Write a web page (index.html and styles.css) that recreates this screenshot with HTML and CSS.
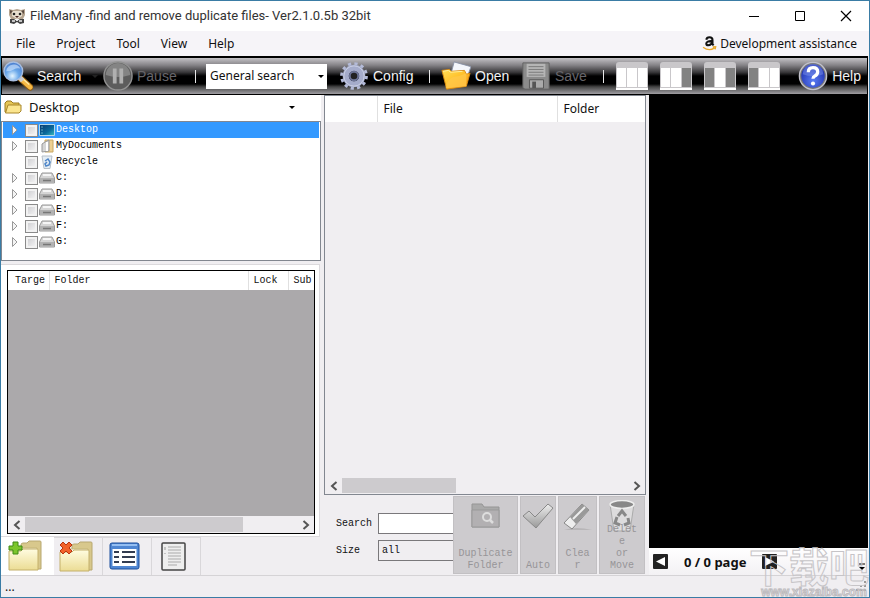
FILE: index.html
```html
<!DOCTYPE html>
<html lang="en">
<head>
<meta charset="utf-8">
<title>FileMany</title>
<link rel="stylesheet" href="styles.css">
</head>
<body>
<svg class="defs" aria-hidden="true">
  <defs>
    <linearGradient id="folder" x1="0" y1="0" x2="0" y2="1"><stop offset="0" stop-color="#fffce0"/><stop offset="1" stop-color="#ebdc94"/></linearGradient>
    <linearGradient id="gold" x1="0" y1="0" x2="1" y2="1"><stop offset="0" stop-color="#ffdf58"/><stop offset=".5" stop-color="#ffc02a"/><stop offset="1" stop-color="#f58a10"/></linearGradient>
    <linearGradient id="steel" x1="0" y1="0" x2="0" y2="1"><stop offset="0" stop-color="#eee"/><stop offset="1" stop-color="#999"/></linearGradient>
    <radialGradient id="lens" cx=".45" cy=".75" r=".7"><stop offset="0" stop-color="#e6f6ff"/><stop offset=".5" stop-color="#6aa8ea"/><stop offset="1" stop-color="#4c80d0"/></radialGradient>
    <radialGradient id="ball" cx=".5" cy=".7" r=".7"><stop offset="0" stop-color="#5a7cf4"/><stop offset="1" stop-color="#1c2ca8"/></radialGradient>
    <linearGradient id="desk" x1="0" y1="0" x2="1" y2="1"><stop offset="0" stop-color="#08366e"/><stop offset=".6" stop-color="#0a6a9c"/><stop offset="1" stop-color="#3cc0c0"/></linearGradient>
    <symbol id="expand" viewBox="0 0 8 12"><path d="M1.500 1.500v9L6 6z" fill="#f4f4f4" stroke="#999"/></symbol>
    <symbol id="drive" viewBox="0 0 16 14"><path d="M3 2h10l2.500 5v5H.5V7z" fill="#d5d5d5" stroke="#999"/><path d="M1 7h14v4.500H1z" fill="#b2b2b2"/><path d="M4 9.500h8" stroke="#777" stroke-width="1.500"/><path d="M4 4h8" stroke="#f5f5f5" stroke-width="2"/></symbol>
    <symbol id="bigfolder" viewBox="0 0 34 32"><path d="M13 5q0-2 2-2h4l2-2h11q1 0 1 1v27H13z" fill="#d8c88c" stroke="#b8a870"/><path d="M5 8h24v20H5z" fill="#fff" stroke="#c5b678"/><path d="M1 11h12l2-2h14q1 0 1 1v20H1z" fill="url(#folder)" stroke="#c4b06a"/></symbol>
  </defs>
</svg>
<div class="window">
  <header class="titlebar">
    <svg class="app-icon" viewBox="0 0 18 18"><path d="M1 2l4 1 4-1 4 1 4-1v6l-2 4H3L1 8z" fill="#b5a48f"/><path d="M4 4h10v5l-5 3-5-3z" fill="#e8dfcf"/><path d="M2 3l3 1-3 3zM16 3l-3 1 3 3z" fill="#5b4b41"/><circle cx="6" cy="7" r="1.300" fill="#222"/><circle cx="12" cy="7" r="1.300" fill="#222"/><path d="M7 9h4l-2 2z" fill="#422"/><path d="M2 12h4l3 2 3-2h4v4l-4 1-3-2-3 2-4-1z" fill="#444"/><path d="M4 14h3M11 14h3M8 13h2" stroke="#eee" stroke-width="1.500"/></svg>
    <h1>FileMany -find and remove duplicate files- Ver2.1.0.5b 32bit</h1>
    <div class="caption-buttons">
      <button aria-label="Minimize"><svg viewBox="0 0 12 12"><path d="M1 6.500h10" stroke="#000"/></svg></button>
      <button aria-label="Maximize"><svg viewBox="0 0 12 12"><path d="M1.500 1.500h9v9h-9z" fill="none" stroke="#000"/></svg></button>
      <button aria-label="Close"><svg viewBox="0 0 12 12"><path d="M1 1l10 10M11 1L1 11" stroke="#000" stroke-width="1.200"/></svg></button>
    </div>
  </header>
  <nav class="menubar">
    <button>File</button><button>Project</button><button>Tool</button><button>View</button><button>Help</button>
    <a href="#assist" class="assist"><svg viewBox="0 0 14 14"><path d="M4 3.500Q4.300 1.200 7 1.200q2.800 0 2.800 2.500v3.800l1 1.200M9.500 4.800Q4 4.500 4 7q0 1.700 1.800 1.700Q9 8.500 9.500 5.500" fill="none" stroke="#111" stroke-width="1.900"/><path d="M1 10.500q5.500 4 10.500.8M10 10.300l2.700-.3-.5 2.500" fill="none" stroke="#e9a82c" stroke-width="1.300"/></svg>Development assistance</a>
  </nav>
  <div class="toolbar">
    <button class="tool">
      <svg viewBox="0 0 32 32"><path d="M19 19l10 9" stroke="#8b5b14" stroke-width="7" stroke-linecap="round"/><path d="M19 19l10 9" stroke="#f6b944" stroke-width="5" stroke-linecap="round"/><path d="M20 18l8 7" stroke="#ffe9a4" stroke-width="1.500"/><path d="M17 17l4 4" stroke="#ccc" stroke-width="5"/><circle cx="11" cy="11" r="10" fill="url(#lens)" stroke="#a8bee0" stroke-width="1.500"/><path d="M3.500 11a8 8 0 0 1 15-3q-4-1-7 1t-8 2z" fill="#d5e8ff" opacity=".6"/></svg>
      <span>Search</span><i class="caret dim"></i></button>
    <button class="tool off" disabled>
      <svg viewBox="0 0 32 32"><circle cx="16" cy="16" r="15" fill="#5c5c5c" stroke="#929292" stroke-width="1.500"/><path d="M3 15a13 13 0 0 1 26 0q-13 4-26 0z" fill="#848484"/><path d="M12.500 8v16M19.500 8v16" stroke="#b0b0b0" stroke-width="4"/></svg>
      <span>Pause</span></button>
    <i class="divider"></i>
    <select aria-label="Search type" class="search-type"><option>General search</option></select>
    <button class="tool">
      <svg viewBox="0 0 32 32"><circle cx="16" cy="16" r="13" fill="none" stroke="#b4bbd8" stroke-width="3.600" stroke-dasharray="3.400 3.407"/><circle cx="16" cy="16" r="8.800" fill="none" stroke="#a5accb" stroke-width="6.500"/><circle cx="16" cy="16" r="10.800" fill="none" stroke="#ccd1e4"/><circle cx="16" cy="16" r="4.500" fill="#222" stroke="#6d7598" stroke-width="2"/></svg>
      <span>Config</span></button>
    <i class="divider"></i>
    <button class="tool">
      <svg viewBox="0 0 32 32"><path d="M14 1l18 5-7 19-16-5z" fill="#f4f6fb" stroke="#8b93a8"/><path d="M1 10l8-1 2 2 14-1 2 4 4-1-4 14-21 3z" fill="url(#gold)" stroke="#d98a12"/><path d="M5 29q1-9 8-12 8-1 14-4v14z" fill="#ffc84a" opacity=".8"/><path d="M2 11l6-1 2 2 13-1" stroke="#fff0a0" fill="none"/></svg>
      <span>Open</span></button>
    <button class="tool off" disabled>
      <svg viewBox="0 0 32 32"><path d="M2 2h28v28H4l-2-2z" fill="#8b8b8b" stroke="#626262"/><path d="M6 3h20v14H6z" fill="#b5b5b5"/><path d="M8 6h16M8 9h16M8 12h16M8 15h16" stroke="#777"/><path d="M9 20h15v9H9z" fill="#aaa" stroke="#555"/><path d="M12 22h4v7h-4z" fill="#555"/></svg>
      <span>Save</span></button>
    <i class="divider"></i>
    <div class="panes">
      <button aria-label="Show all panes"><svg viewBox="0 0 32 28"><path d="M0 27V3q0-3 3-3h26q3 0 3 3v24z" fill="#c9c7ca"/><path d="M1 6h9v19H1zM11 6h10v19H11zM22 6h9v19h-9z" fill="#fff"/><path d="M0 27h32" stroke="#fff" stroke-width="2"/></svg></button>
      <button aria-label="Hide right pane"><svg viewBox="0 0 32 28"><path d="M0 27V3q0-3 3-3h26q3 0 3 3v24z" fill="#c9c7ca"/><path d="M1 6h9v19H1zM11 6h10v19H11z" fill="#fff"/><path d="M22 6h9v19h-9z" fill="#828282"/><path d="M0 27h32" stroke="#fff" stroke-width="2"/></svg></button>
      <button aria-label="Hide side panes"><svg viewBox="0 0 32 28"><path d="M0 27V3q0-3 3-3h26q3 0 3 3v24z" fill="#c9c7ca"/><path d="M11 6h10v19H11z" fill="#fff"/><path d="M1 6h9v19H1zM22 6h9v19h-9z" fill="#828282"/><path d="M0 27h32" stroke="#fff" stroke-width="2"/></svg></button>
      <button aria-label="Hide left pane"><svg viewBox="0 0 32 28"><path d="M0 27V3q0-3 3-3h26q3 0 3 3v24z" fill="#c9c7ca"/><path d="M11 6h10v19H11zM22 6h9v19h-9z" fill="#fff"/><path d="M1 6h9v19H1z" fill="#828282"/><path d="M0 27h32" stroke="#fff" stroke-width="2"/></svg></button>
    </div>
    <button class="tool">
      <svg viewBox="0 0 32 32"><circle cx="16" cy="16" r="14.500" fill="#777" stroke="#c2c2cc" stroke-width="1.500"/><circle cx="16" cy="16" r="12.500" fill="url(#ball)"/><path d="M5 14a11 11 0 0 1 22 0q-11 4-22 0z" fill="#8fa4f4" opacity=".4"/><path d="M11 12q0-5 5-5t5 4.500q0 3-3 4.500-2 1-2 3" fill="none" stroke="#fff" stroke-width="3.500"/><circle cx="16" cy="24" r="2.200" fill="#fff"/></svg>
      <span>Help</span></button>
  </div>
  <main>
    <section class="left">
      <div class="location">
        <svg viewBox="0 0 18 16"><path d="M1 13V4l2-2h4l2 2h6v9z" fill="#e6c655" stroke="#9c7a20"/><path d="M1.500 14L4 6h13v6l-2 2z" fill="#fbe58e" stroke="#a8862a"/></svg>
        <select aria-label="Location"><option>Desktop</option></select>
      </div>
      <ul class="tree">
        <li class="selected"><button aria-label="Expand"><svg viewBox="0 0 8 12"><use href="#expand"/></svg></button><label><input type="checkbox"><svg class="node" viewBox="0 0 16 14"><path d="M.5 1.500h15v11H.5z" fill="url(#desk)" stroke="#b5d8e8"/><path d="M2.500 4h1M2.500 7h1M2.500 10h1" stroke="#bff"/></svg>Desktop</label></li>
        <li><button aria-label="Expand"><svg viewBox="0 0 8 12"><use href="#expand"/></svg></button><label><input type="checkbox"><svg class="node" viewBox="0 0 16 14"><path d="M6 1h8v12H6z" fill="#edd092" stroke="#c8a862"/><path d="M3 5l3-2 4-2v11l-7 1z" fill="#d5d5d5" stroke="#999"/><path d="M8 3v9" stroke="#fff" stroke-width="2"/></svg>MyDocuments</label></li>
        <li><button class="leaf" aria-label="No children" disabled></button><label><input type="checkbox"><svg class="node" viewBox="0 0 16 14"><path d="M3 1h10l-2 12.500H5z" fill="#e4edf4" stroke="#b5bfc8"/><path d="M6 6l3-2 2 3-1 3-3 1-1-2 2-2" fill="none" stroke="#4f86c8" stroke-width="1.500"/></svg>Recycle</label></li>
        <li><button aria-label="Expand"><svg viewBox="0 0 8 12"><use href="#expand"/></svg></button><label><input type="checkbox"><svg class="node" viewBox="0 0 16 14"><use href="#drive"/></svg>C:</label></li>
        <li><button aria-label="Expand"><svg viewBox="0 0 8 12"><use href="#expand"/></svg></button><label><input type="checkbox"><svg class="node" viewBox="0 0 16 14"><use href="#drive"/></svg>D:</label></li>
        <li><button aria-label="Expand"><svg viewBox="0 0 8 12"><use href="#expand"/></svg></button><label><input type="checkbox"><svg class="node" viewBox="0 0 16 14"><use href="#drive"/></svg>E:</label></li>
        <li><button aria-label="Expand"><svg viewBox="0 0 8 12"><use href="#expand"/></svg></button><label><input type="checkbox"><svg class="node" viewBox="0 0 16 14"><use href="#drive"/></svg>F:</label></li>
        <li><button aria-label="Expand"><svg viewBox="0 0 8 12"><use href="#expand"/></svg></button><label><input type="checkbox"><svg class="node" viewBox="0 0 16 14"><use href="#drive"/></svg>G:</label></li>
      </ul>
      <div class="tab-page">
        <div class="targets">
          <table><thead><tr><th class="c-target">Targe</th><th>Folder</th><th class="c-lock">Lock</th><th class="c-sub">Sub</th></tr></thead></table>
          <div class="fill"></div>
          <div class="scroll">
            <button aria-label="Scroll left"><svg viewBox="0 0 8 10"><path d="M6.500 1L2 5l4.500 4" fill="none" stroke="#555" stroke-width="2"/></svg></button>
            <div class="track"><i class="thumb wide"></i></div>
            <button aria-label="Scroll right"><svg viewBox="0 0 8 10"><path d="M1.500 1L6 5 1.500 9" fill="none" stroke="#555" stroke-width="2"/></svg></button>
          </div>
        </div>
      </div>
      <div class="tabs">
        <button class="active" aria-label="Include folders"><svg viewBox="0 0 34 32"><use href="#bigfolder"/><path d="M5 2h5v4h4v4h-4v4H5v-4H1V6h4z" fill="#7cc62c" stroke="#3f8a14"/></svg></button>
        <button aria-label="Exclude folders"><svg viewBox="0 0 34 32"><use href="#bigfolder"/><path d="M1 4l3-3 3 3 3-3 3 3-3 3 3 3-3 3-3-3-3 3-3-3 3-3z" fill="#f2622a" stroke="#b83510"/></svg></button>
        <button aria-label="List"><svg viewBox="0 0 34 32"><rect x="2" y="2" width="29" height="26" rx="2" fill="#4f86d2" stroke="#1d4f9c"/><path d="M4 4h25" stroke="#94bef2" stroke-width="2"/><path d="M4.500 8h24v17h-24z" fill="#fff"/><path d="M6 11h5M14 11h13M6 16h5M14 16h13M6 21h5M14 21h13" stroke="#333c50" stroke-width="2"/></svg></button>
        <button aria-label="Report"><svg viewBox="0 0 34 32"><rect x="5" y="2" width="23" height="27" rx="1" fill="#eee" stroke="#444" stroke-width="1.500"/><path d="M11 6h13M11 9h13M11 12h13M11 15h13M11 18h13M11 21h13M11 24h9" stroke="#aaa"/><path d="M8 6v3M8 12v1" stroke="#999"/></svg></button>
      </div>
    </section>
    <section class="middle">
      <div class="results">
        <table><thead><tr><th class="c-mark" aria-label="Mark"></th><th class="c-file">File</th><th>Folder</th></tr></thead></table>
        <div class="fill"></div>
        <div class="scroll">
          <button aria-label="Scroll left"><svg viewBox="0 0 8 10"><path d="M6.500 1L2 5l4.500 4" fill="none" stroke="#555" stroke-width="2"/></svg></button>
          <div class="track"><i class="thumb short"></i></div>
          <button aria-label="Scroll right"><svg viewBox="0 0 8 10"><path d="M1.500 1L6 5 1.500 9" fill="none" stroke="#555" stroke-width="2"/></svg></button>
        </div>
      </div>
      <div class="actions">
        <form class="filters">
          <label for="q">Search</label><input id="q" type="text">
          <label for="size">Size</label><select id="size"><option>all</option></select>
        </form>
        <button class="action a1" disabled><svg viewBox="0 0 32 32"><path d="M2 27V4h10l2 3h15v20z" fill="#aaa" stroke="#959595"/><path d="M2 10h27v17H2z" fill="#b2b0b2" stroke="#999"/><circle cx="17" cy="17" r="4" fill="none" stroke="#ddd" stroke-width="2"/><path d="M20 20l3 3" stroke="#ddd" stroke-width="2.500"/></svg><span>Duplicate<br>Folder</span></button>
        <button class="action a2" disabled><svg viewBox="0 0 32 32"><path d="M1 16l6-5 6 6L26 4l5 4-17 20z" fill="url(#steel)" stroke="#888"/></svg><span>Auto</span></button>
        <button class="action a3" disabled><svg viewBox="0 0 32 32"><path d="M2 30q12-4 28 0z" fill="#b8b6b8"/><path d="M2 23L20 4l7 6L10 29z" fill="#eee" stroke="#888"/><path d="M8 17L20 4l7 6-13 14z" fill="#999"/><path d="M11 19L23 7" stroke="#eee" stroke-width="2"/></svg><span>Clea<br>r</span></button>
        <button class="action a4" disabled><svg viewBox="0 0 32 32"><path d="M4 4h24l-4 27H8z" fill="#dddcdd" stroke="#aaa"/><ellipse cx="16" cy="4.500" rx="12" ry="4" fill="#888" stroke="#eee" stroke-width="1.500"/><path d="M12 16l4-5 4 5M22 18l1 5-5 2M14 25l-5-2 2-6" fill="none" stroke="#888" stroke-width="3"/></svg><span>Delet<br>e<br>or<br>Move</span></button>
      </div>
    </section>
    <section class="right">
      <div class="preview"></div>
      <div class="pager">
        <button aria-label="Previous page"><svg viewBox="0 0 15 15"><rect width="15" height="15" rx="1" fill="#222"/><path d="M12 3v9L3 7.500z" fill="#fff"/></svg></button>
        <output>0 / 0 page</output>
        <button aria-label="Next page"><svg viewBox="0 0 15 15"><rect width="15" height="15" rx="1" fill="#222"/><path d="M3 3v9l9-4.500z" fill="#fff"/></svg></button>
        <button class="overflow" aria-label="More"><svg viewBox="0 0 8 10"><path d="M1 2h6" stroke="#000"/><path d="M1 5h6L4 8z"/></svg></button>
      </div>
    </section>
  </main>
  <footer class="statusbar"><span>...</span><svg viewBox="0 0 11 11"><path d="M8 0h2v2H8zM4 4h2v2H4zM8 4h2v2H8zM0 8h2v2H0zM4 8h2v2H4zM8 8h2v2H8z" fill="#999"/></svg></footer>
  <div class="watermark" aria-hidden="true"><b>下载吧</b><span>www.xiazaiba.com</span></div>
</div>
</body>
</html>
```
FILE: styles.css
```css
* { box-sizing: border-box; }
html, body { height: 100%; margin: 0; }
body { font: 13px/16px "Noto Sans", sans-serif; color: #111; }
button, select, input { font: inherit; color: inherit; border-radius: 0; margin: 0; }
button { background: none; border: 0; padding: 0; }
svg { display: block; flex: none; }
select { appearance: none; }
.defs { position: absolute; width: 0; height: 0; }

.window {
  position: relative;
  display: flex;
  flex-direction: column;
  min-height: 100%;
  border: 1px solid #3a7ca5;
  background: #f0eef1;
  overflow: hidden;
}

.titlebar { display: flex; align-items: center; height: 30px; padding-left: 7px; background: #fff; }
.app-icon { width: 18px; height: 18px; margin-right: 4px; }
h1 { margin: 0; font: 400 13px/16px Roboto, sans-serif; color: #333; }
.caption-buttons { display: flex; margin-left: auto; }
.caption-buttons button { display: grid; place-items: center; width: 46px; height: 28px; }
.caption-buttons svg { width: 12px; height: 12px; }

.menubar { display: flex; align-items: center; height: 25px; padding: 0 12px 0 15px; gap: 21px; font-size: 12px; background: #f6f4f8; }
.assist { display: flex; align-items: center; gap: 3px; margin-left: auto; color: inherit; text-decoration: none; }
.assist svg { width: 15px; height: 15px; }

.toolbar {
  display: grid;
  grid-template-columns: 100px 92px 11px 133px 90px 12px 80px 82px 13px 1fr auto;
  align-items: center;
  height: 39px;
  padding: 0 6px 0 1px;
  margin-right: 1px;
  border: 1px solid #000;
  border-top-width: 2px;
  background: linear-gradient(#c4c2c6 0, #858387 20%, #373638 40%, #000 50%, #000 72%, #444 80%, #a09ea3 100%);
  color: #f2f2f2;
  font: 14px/16px "Liberation Sans", sans-serif;
}
.tool { display: flex; align-items: center; gap: 4px; }
.tool svg { width: 30px; height: 30px; }
.off { color: #66656a; }
.divider { width: 1px; height: 13px; background: #e8e8e8; }
.caret { width: 0; height: 0; border: 3px solid transparent; border-top-color: #000; border-bottom: 0; }
.dim { margin-left: 7px; border-top-color: #222; }
.search-type, .location select {
  border: 0;
  background: #fff url("data:image/svg+xml,%3Csvg xmlns='http://www.w3.org/2000/svg' width='6' height='3'%3E%3Cpath d='M0 0h6L3 3z'/%3E%3C/svg%3E") no-repeat right 3px center;
}
.search-type { width: 121px; height: 25px; padding: 0 4px; color: #111; font: 12px/16px "Noto Sans", sans-serif; }
.panes { display: flex; gap: 12px; }
.panes svg { width: 32px; height: 28px; }

main { flex: 1; display: grid; grid-template-columns: 320px minmax(322px, 1fr) 219px; column-gap: 3px; padding-right: 1px; }
section { display: flex; flex-direction: column; min-width: 0; }

.location { display: flex; align-items: center; gap: 3px; height: 26px; padding: 0 0 2px 3px; background: #fff; }
.location svg { width: 18px; height: 16px; }
.location select { flex: 1; height: 22px; padding: 0 4px; background-position: right 26px center; }
.tree { height: 140px; margin: 0; padding: 0 1px; border: 1px solid #828790; background: #fff; list-style: none; font: 10px/16px "Liberation Mono", monospace; color: #000; }
.tree li { display: flex; align-items: center; height: 16px; padding-left: 8px; }
.tree button { width: 9px; height: 12px; margin-right: 5px; }
.tree button svg { width: 8px; height: 12px; }
.tree label { display: flex; align-items: center; }
.tree input { appearance: none; width: 13px; height: 13px; margin-right: 1px; border: 1px solid #8a8a8a; background: linear-gradient(135deg, #c8c8cc, #fafafa); box-shadow: inset 0 0 0 2px #f2f2f2; }
.node { width: 16px; height: 14px; margin-right: 1px; }
.selected { background: #3399ff; color: #fff; }

.tab-page { flex: 1; display: flex; margin: 3px 1px 0 0; padding: 5px 4px 2px 6px; border: 1px solid #dcdadd; border-left: 0; background: #fff; }
.targets { flex: 1; display: flex; flex-direction: column; border: 1px solid #000; }
table { width: 100%; table-layout: fixed; border-collapse: collapse; background: #fff; }
th { padding: 0 0 0 6px; border-right: 1px solid #e0e0e0; font-weight: 400; text-align: left; overflow: hidden; white-space: nowrap; }
th:last-child { border-right: 0; }
.targets table { font: 10px/19px "Liberation Mono", monospace; }
.targets th { padding-left: 5px; }
.targets .c-target { width: 41px; padding-left: 7px; }
.c-lock { width: 40px; }
.c-sub { width: 26px; }
.fill { flex: 1; }
.targets .fill { background: #aba9ab; }
.scroll { display: flex; height: 17px; padding: 1px 0; background: #f0eef1; }
.scroll button { display: grid; place-items: center; width: 17px; }
.scroll svg { width: 8px; height: 10px; }
.track { flex: 1; display: flex; }
.thumb { background: #cdcbce; }
.wide { width: 80%; }
.short { width: 40%; }

.tabs { display: flex; height: 38px; }
.tabs button { display: grid; align-items: center; justify-items: start; width: 49px; padding-left: 5px; border: solid #d9d7da; border-width: 1px 1px 0 0; }
.tabs .active { width: 53px; padding-left: 7px; background: #fff; border: 0; }
.tabs svg { width: 34px; height: 32px; }

.results { flex: 1; display: flex; flex-direction: column; border: 1px solid #828790; }
.results table { font-size: 12px; line-height: 26px; }
.c-mark { width: 52px; }
.c-file { width: 180px; }
.actions { display: flex; gap: 2px; height: 80px; padding: 1px 1px 1px 0; }
.filters { flex: 1; display: grid; grid-template-columns: 42px 1fr; grid-auto-rows: 21px; gap: 6px 0; align-items: center; align-content: start; padding: 17px 0 0 12px; margin-right: -2px; font: 10px/16px "Liberation Mono", monospace; }
.filters input, .filters select { width: 100%; min-width: 0; height: 21px; padding: 0 3px; border: 1px solid #7a787b; border-right: 0; background: #fff; }
.filters select { background: #f0eef1; }
.action { display: flex; flex-direction: column; align-items: center; justify-content: space-between; padding: 3px 0 1px; border: 1px solid #c2c0c3; background: #cdcbce; color: #979598; font: 10px/12px "Liberation Mono", monospace; }
.action svg { width: 32px; height: 32px; }
.a1 { width: 65px; }
.a2 { width: 36px; }
.a3 { width: 39px; }
.a4 { width: 46px; }
.a4 span { margin-top: -8px; }

.preview { flex: 1; background: #000; }
.pager { display: flex; align-items: center; height: 27px; padding-left: 4px; gap: 16px; background: linear-gradient(#fff, #f3f1f4); }
.pager svg { width: 15px; height: 15px; }
.pager output { font-size: 13px; font-weight: 700; }
.pager .overflow { margin: 10px 2px 0 auto; }
.pager .overflow svg { width: 8px; height: 10px; }

.statusbar { display: flex; align-items: center; justify-content: space-between; height: 22px; padding: 0 2px 0 4px; border-top: 1px solid #d5d3d6; font-size: 12px; }
.statusbar svg { width: 11px; height: 11px; }

.watermark { position: absolute; right: 0; bottom: 0; width: 120px; color: transparent; pointer-events: none; text-align: center; }
.watermark b { display: block; font: 700 40px/44px "Noto Sans CJK SC", sans-serif; -webkit-text-stroke: 1px #c6c4c7; }
.watermark span { display: block; padding-left: 10px; font: 700 12px/10px "Liberation Sans", sans-serif; -webkit-text-stroke: 1px #bdbbbe; }
```
